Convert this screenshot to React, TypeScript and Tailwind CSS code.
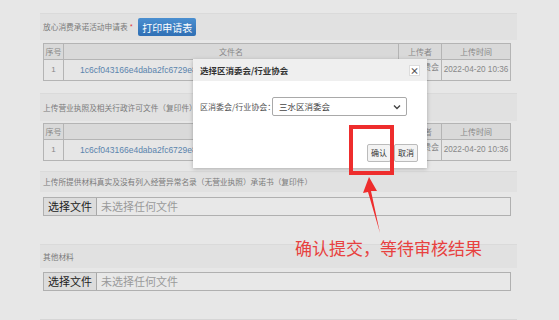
import React from "react";

const font = { fontFamily: '"Noto Sans CJK SC", "Noto Sans", sans-serif' };
const latin = { fontFamily: '"Liberation Sans", "Noto Sans CJK SC", sans-serif' };

function Band({ children, className = "" }: { children: React.ReactNode; className?: string }) {
  return (
    <div className={`flex items-center whitespace-nowrap bg-[#e1e1e1] border-t border-[#dadada] pl-[3px] text-[7.7px] text-[#7a7a7a] ${className}`}>
      {children}
    </div>
  );
}

function FileTable() {
  return (
    <div className="ml-[3px] w-[468px] border border-[#b4b4b4] text-[8px] text-[#888] whitespace-nowrap">
      <div className="flex h-[16px] bg-[#d9d9d9] border-b border-[#b4b4b4]">
        <div className="w-[20px] border-r border-[#b4b4b4] flex items-center justify-center">序号</div>
        <div className="w-[335px] border-r border-[#b4b4b4] flex items-center justify-center">文件名</div>
        <div className="w-[43px] border-r border-[#b4b4b4] flex items-center justify-center">上传者</div>
        <div className="flex-1 flex items-center justify-center">上传时间</div>
      </div>
      <div className="flex h-[20px] bg-[#e6e6e6]">
        <div className="w-[20px] border-r border-[#b4b4b4] flex items-center justify-center" style={latin}>1</div>
        <div className="w-[335px] border-r border-[#b4b4b4] flex items-center pl-[16px] text-[#5b84ad] text-[8.5px]" style={latin}>
          1c6cf043166e4daba2fc6729e8cc2
        </div>
        <div className="w-[43px] border-r border-[#b4b4b4] flex items-start justify-end pr-[2px] pt-[1px]">费会</div>
        <div className="flex-1 flex items-center justify-center text-[8.2px]" style={latin}>2022-04-20 10:36</div>
      </div>
    </div>
  );
}

function FileInput() {
  return (
    <div className="ml-[3px] w-[468px] h-[19px] flex items-center border border-[#b0b0b0] bg-[#e8e8e8]">
      <div className="h-full px-[4px] flex items-center bg-[#dcdcdc] border-r border-[#a8a8a8] text-[11px] text-[#222]">选择文件</div>
      <div className="pl-[4px] text-[11px] text-[#9a9a9a]">未选择任何文件</div>
    </div>
  );
}

export default function App() {
  return (
    <div className="relative w-[559px] h-[320px] overflow-hidden bg-[#e7e7e7]" style={font}>
      <div className="pl-[40px] pt-[13px] w-[517px] flex flex-col">
        <Band className="h-[27px]">
          <span>放心消费承诺活动申请表</span>
          <span className="text-[#e04040] ml-[2px]">*</span>
          <div className="ml-[5px] h-[18px] w-[58px] rounded-[2px] bg-gradient-to-b from-[#4a8fd0] to-[#2f6fb4] text-white text-[10px] flex items-center justify-center">
            打印申请表
          </div>
        </Band>
        <div className="h-[3px]" />
        <FileTable />
        <div className="h-[12px]" />
        <Band className="h-[28px]">上传营业执照及相关行政许可文件（复印件）</Band>
        <div className="h-[2px]" />
        <FileTable />
        <div className="h-[10px]" />
        <Band className="h-[21px]">上传所提供材料真实及没有列入经营异常名录（无营业执照）承诺书（复印件）</Band>
        <div className="h-[5px]" />
        <FileInput />
        <div className="h-[28px]" />
        <Band className="h-[24px]">其他材料</Band>
        <div className="h-[4px]" />
        <FileInput />
        <div className="h-[28px]" />
        <div className="h-[1px] bg-[#d6d6d6]" />
      </div>

      {/* modal */}
      <div className="absolute left-[193px] top-[59px] w-[234px] h-[109px] bg-white shadow-[0_1px_4px_rgba(0,0,0,0.25)] flex flex-col">
        <div className="h-[22px] bg-[#efefef] flex items-center justify-between pl-[7px] pr-[7px]">
          <span className="text-[8.5px] font-bold text-[#333]">选择区消委会/行业协会</span>
          <div className="w-[11px] h-[11px] bg-white border border-[#ddd] flex items-center justify-center text-[9px] leading-none text-[#555] font-bold">×</div>
        </div>
        <div className="flex items-center pl-[7px] mt-[16px] whitespace-nowrap">
          <span className="text-[8px] text-[#555] w-[72px]">区消委会/行业协会：</span>
          <div className="w-[135px] h-[19px] border border-[#a9a9a9] rounded-[2px] flex items-center justify-between pl-[6px] pr-[5px]">
            <span className="text-[8.5px] text-[#444]">三水区消委会</span>
            <svg width="8" height="6" viewBox="0 0 8 6"><path d="M1 1.5 L4 4.5 L7 1.5" stroke="#444" strokeWidth="1.4" fill="none" /></svg>
          </div>
        </div>
        <div className="flex justify-end gap-[3px] pr-[9px] mt-[28px]">
          <div className="w-[24px] h-[18px] border border-[#bbb] rounded-[2px] bg-[#f3f3f3] flex items-center justify-center text-[8px] text-[#333]">确认</div>
          <div className="w-[24px] h-[18px] border border-[#bbb] rounded-[2px] bg-[#f3f3f3] flex items-center justify-center text-[8px] text-[#333]">取消</div>
        </div>
      </div>

      {/* red highlight */}
      <div className="absolute left-[349px] top-[125px] w-[45px] h-[50px] border-[4px] border-[#ee2d2d]" />
      <svg className="absolute left-0 top-0" width="559" height="320" viewBox="0 0 559 320">
        <path d="M369 177 L363 193 L368 192 L380 233 L371 191 L377 191 Z" fill="#ee2d2d" />
      </svg>
      <div className="absolute left-[295px] top-[239px] text-[17px] leading-none text-[#e8413f] whitespace-nowrap">
        确认提交，等待审核结果
      </div>
    </div>
  );
}
